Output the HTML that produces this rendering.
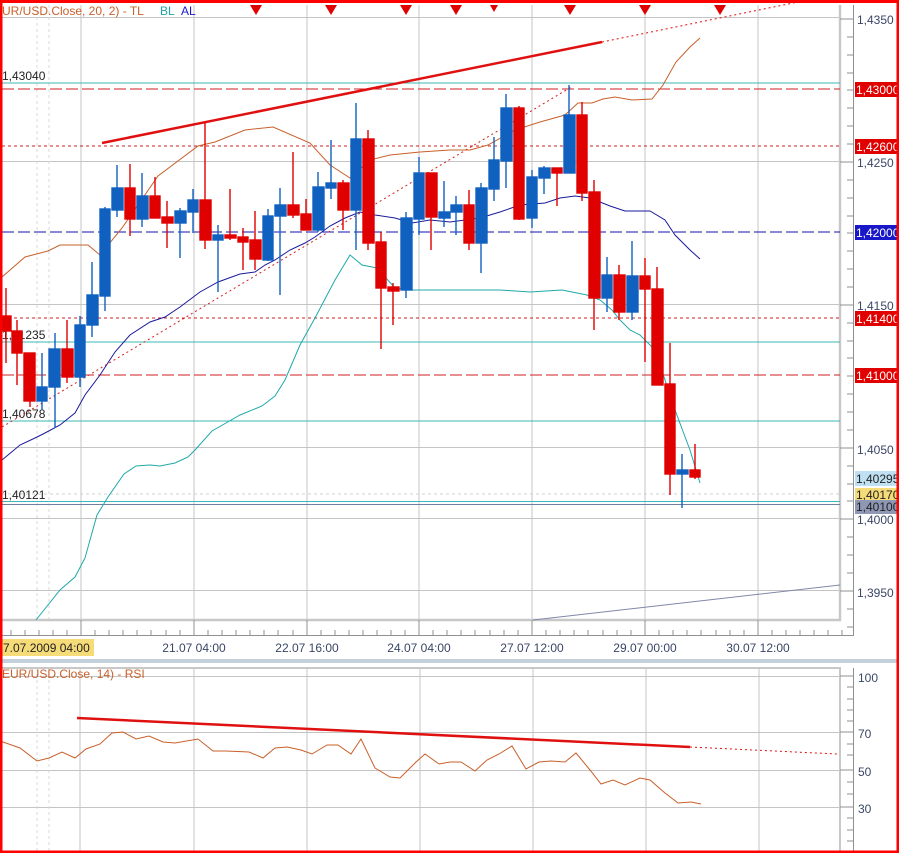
<!DOCTYPE html>
<html><head><meta charset="utf-8"><style>
html,body{margin:0;padding:0;background:#fff}
svg{display:block}
text{font-family:"Liberation Sans","DejaVu Sans",sans-serif;font-size:12px}
</style></head><body>
<svg width="899" height="853" viewBox="0 0 899 853" xmlns="http://www.w3.org/2000/svg">
<rect x="0" y="0" width="899" height="853" fill="#fff"/>
<g stroke="#c4c4c4" stroke-width="1">
<line x1="2" y1="17.5" x2="840" y2="17.5"/>
<line x1="2" y1="161.5" x2="840" y2="161.5"/>
<line x1="2" y1="304.5" x2="840" y2="304.5"/>
<line x1="2" y1="447.5" x2="840" y2="447.5"/>
<line x1="2" y1="518.5" x2="840" y2="518.5"/>
<line x1="2" y1="590.5" x2="840" y2="590.5"/>
<line x1="81" y1="5" x2="81" y2="620"/><line x1="194" y1="5" x2="194" y2="620"/>
<line x1="307" y1="5" x2="307" y2="620"/><line x1="419" y1="5" x2="419" y2="620"/>
<line x1="532" y1="5" x2="532" y2="620"/><line x1="645" y1="5" x2="645" y2="620"/>
<line x1="758" y1="5" x2="758" y2="620"/>
</g>
<g stroke="#d8d8d8" stroke-dasharray="3,3"><line x1="37" y1="5" x2="37" y2="620"/><line x1="49" y1="5" x2="49" y2="620"/></g>
<polyline points="2,620 840,620 840,5" fill="none" stroke="#c8c8c8" stroke-width="2.5"/>
<line x1="2" y1="83" x2="840" y2="83" stroke="#3cb8b8"/>
<line x1="2" y1="89" x2="840" y2="89" stroke="#d02020" stroke-dasharray="12,4"/>
<line x1="2" y1="146" x2="840" y2="146" stroke="#d02020" stroke-dasharray="3,3"/>
<line x1="2" y1="232" x2="840" y2="232" stroke="#1010b0" stroke-dasharray="12,4"/>
<line x1="2" y1="318" x2="840" y2="318" stroke="#d02020" stroke-dasharray="3,3"/>
<line x1="2" y1="342" x2="840" y2="342" stroke="#3cb8b8"/>
<line x1="2" y1="375" x2="840" y2="375" stroke="#d02020" stroke-dasharray="12,4"/>
<line x1="2" y1="421" x2="840" y2="421" stroke="#3cb8b8"/>
<line x1="2" y1="494" x2="840" y2="494" stroke="#d0d0d0" stroke-dasharray="3,3"/>
<line x1="2" y1="501.5" x2="840" y2="501.5" stroke="#3cb8b8"/>
<line x1="2" y1="504.5" x2="840" y2="504.5" stroke="#7080a0"/>
<text x="2" y="80" fill="#222">1,43040</text>
<text x="2" y="339" fill="#222">1,41235</text>
<text x="2" y="418" fill="#222">1,40678</text>
<text x="2" y="499" fill="#222">1,40121</text>
<line x1="533" y1="620" x2="840" y2="585" stroke="#8088a8"/>
<polyline fill="none" stroke="#c8602a" stroke-width="1" points="2,277 25,257 48,251 60,245 88,245 100,255 122,228 158,176 198,146 215,142 245,130 273,127 310,143 330,165 350,178 370,160 390,155 420,152 450,150 470,150 488,145 515,130 540,122 565,115 578,103 592,103 603,99 615,97 632,100 652,99 663,85 676,62 690,47 700,38"/>
<polyline fill="none" stroke="#20a8a8" stroke-width="1" points="36,620 60,590 75,577 85,558 97,515 108,497 124,474 136,466 150,465 160,466 175,463 188,457 195,450 212,431 226,423 240,415 262,406 275,396 285,380 300,345 315,318 335,280 350,255 362,265 377,268 395,288 410,290 450,290 500,290 530,292 562,290 587,295 600,300 612,310 620,320 630,330 640,335 655,350 665,380 675,410 690,450 700,483"/>
<polyline fill="none" stroke="#1a1a9a" stroke-width="1" points="2,460 20,445 35,438 45,433 60,425 75,413 85,395 100,375 115,352 130,335 150,322 165,317 180,307 200,292 218,282 240,274 255,272 265,265 275,260 290,250 305,243 315,237 330,226 345,218 360,212 375,215 395,218 412,223 430,220 450,222 480,218 500,212 520,205 545,203 560,198 575,196 590,198 610,206 625,211 650,211 665,220 675,235 690,250 700,259"/>
<line x1="2" y1="427" x2="573" y2="86" stroke="#d02020" stroke-dasharray="2,3"/>
<line x1="102" y1="143" x2="602" y2="42" stroke="#e01010" stroke-width="2.5"/>
<line x1="602" y1="42" x2="798" y2="2" stroke="#e01010" stroke-dasharray="2,3"/>
<g stroke-width="1.4">
<g stroke="#e00000" fill="#e00000">
<line x1="6" y1="288" x2="6" y2="363"/><rect x="1" y="316" width="10" height="15"/>
<line x1="17" y1="320" x2="17" y2="385"/><rect x="12" y="331" width="10" height="22"/>
<line x1="30" y1="353" x2="30" y2="407"/><rect x="24" y="353" width="11" height="48"/>
<line x1="67" y1="320" x2="67" y2="383"/><rect x="62" y="349" width="11" height="28"/>
<line x1="130" y1="164" x2="130" y2="236"/><rect x="125" y="188" width="10" height="31"/>
<line x1="155" y1="177" x2="155" y2="218"/><rect x="150" y="196" width="10" height="22"/>
<line x1="167" y1="201" x2="167" y2="248"/><rect x="162" y="217" width="11" height="6"/>
<line x1="205" y1="123" x2="205" y2="249"/><rect x="200" y="200" width="11" height="40"/>
<line x1="230" y1="189" x2="230" y2="240"/><rect x="225" y="235" width="11" height="3"/>
<line x1="243" y1="228" x2="243" y2="270"/><rect x="238" y="237" width="10" height="5"/>
<line x1="255" y1="211" x2="255" y2="270"/><rect x="250" y="240" width="11" height="19"/>
<line x1="293" y1="152" x2="293" y2="218"/><rect x="288" y="205" width="11" height="10"/>
<line x1="306" y1="199" x2="306" y2="230"/><rect x="301" y="214" width="10" height="16"/>
<line x1="343" y1="180" x2="343" y2="230"/><rect x="338" y="183" width="11" height="27"/>
<line x1="368" y1="130" x2="368" y2="250"/><rect x="363" y="139" width="11" height="104"/>
<line x1="381" y1="232" x2="381" y2="349"/><rect x="376" y="242" width="10" height="46"/>
<line x1="393" y1="283" x2="393" y2="325"/><rect x="388" y="287" width="11" height="4"/>
<line x1="431" y1="173" x2="431" y2="250"/><rect x="426" y="173" width="11" height="44"/>
<line x1="469" y1="190" x2="469" y2="250"/><rect x="464" y="205" width="10" height="38"/>
<line x1="519" y1="106" x2="519" y2="220"/><rect x="514" y="108" width="10" height="111"/>
<line x1="557" y1="168" x2="557" y2="206"/><rect x="552" y="168" width="10" height="5"/>
<line x1="582" y1="102" x2="582" y2="201"/><rect x="577" y="115" width="10" height="78"/>
<line x1="594" y1="180" x2="594" y2="330"/><rect x="589" y="192" width="11" height="106"/>
<line x1="619" y1="265" x2="619" y2="320"/><rect x="614" y="275" width="11" height="37"/>
<line x1="645" y1="258" x2="645" y2="362"/><rect x="640" y="276" width="10" height="13"/>
<line x1="657" y1="267" x2="657" y2="385"/><rect x="652" y="289" width="11" height="96"/>
<line x1="670" y1="343" x2="670" y2="495"/><rect x="665" y="384" width="10" height="90"/>
<line x1="695" y1="444" x2="695" y2="479"/><rect x="690" y="470" width="10" height="7"/>
</g>
<g stroke="#1060c0" fill="#1060c0">
<line x1="42" y1="353" x2="42" y2="410"/><rect x="37" y="387" width="10" height="14"/>
<line x1="55" y1="333" x2="55" y2="428"/><rect x="49" y="349" width="11" height="38"/>
<line x1="80" y1="316" x2="80" y2="387"/><rect x="75" y="325" width="10" height="52"/>
<line x1="92" y1="262" x2="92" y2="337"/><rect x="87" y="295" width="11" height="30"/>
<line x1="105" y1="207" x2="105" y2="311"/><rect x="100" y="209" width="10" height="87"/>
<line x1="117" y1="165" x2="117" y2="217"/><rect x="112" y="188" width="11" height="22"/>
<line x1="142" y1="173" x2="142" y2="227"/><rect x="137" y="196" width="11" height="23"/>
<line x1="180" y1="208" x2="180" y2="258"/><rect x="175" y="211" width="11" height="12"/>
<line x1="193" y1="189" x2="193" y2="233"/><rect x="188" y="200" width="10" height="12"/>
<line x1="218" y1="225" x2="218" y2="292"/><rect x="213" y="235" width="10" height="5"/>
<line x1="268" y1="209" x2="268" y2="261"/><rect x="263" y="216" width="10" height="44"/>
<line x1="280" y1="188" x2="280" y2="295"/><rect x="275" y="205" width="11" height="11"/>
<line x1="318" y1="172" x2="318" y2="232"/><rect x="313" y="187" width="11" height="43"/>
<line x1="331" y1="140" x2="331" y2="199"/><rect x="326" y="183" width="10" height="5"/>
<line x1="356" y1="103" x2="356" y2="250"/><rect x="351" y="139" width="10" height="71"/>
<line x1="406" y1="212" x2="406" y2="298"/><rect x="401" y="218" width="11" height="72"/>
<line x1="419" y1="157" x2="419" y2="235"/><rect x="414" y="173" width="10" height="46"/>
<line x1="444" y1="181" x2="444" y2="227"/><rect x="439" y="212" width="11" height="6"/>
<line x1="456" y1="196" x2="456" y2="235"/><rect x="451" y="205" width="11" height="7"/>
<line x1="481" y1="183" x2="481" y2="273"/><rect x="476" y="188" width="11" height="55"/>
<line x1="494" y1="137" x2="494" y2="201"/><rect x="489" y="160" width="10" height="29"/>
<line x1="506" y1="94" x2="506" y2="188"/><rect x="501" y="108" width="11" height="53"/>
<line x1="532" y1="170" x2="532" y2="228"/><rect x="527" y="177" width="10" height="41"/>
<line x1="544" y1="166" x2="544" y2="194"/><rect x="539" y="168" width="11" height="10"/>
<line x1="569" y1="85" x2="569" y2="173"/><rect x="564" y="115" width="11" height="58"/>
<line x1="607" y1="257" x2="607" y2="312"/><rect x="602" y="275" width="10" height="23"/>
<line x1="632" y1="241" x2="632" y2="320"/><rect x="627" y="276" width="11" height="36"/>
<line x1="682" y1="454" x2="682" y2="508"/><rect x="677" y="470" width="11" height="4"/>
</g>
</g>
<g fill="#e00000">
<polygon points="250,5 262,5 256,15"/><polygon points="325,5 337,5 331,15"/><polygon points="400,5 412,5 406,15"/>
<polygon points="450,5 462,5 456,15"/><polygon points="490,5 498,5 494,12"/><polygon points="564,5 576,5 570,15"/>
<polygon points="639,5 651,5 645,15"/><polygon points="714,5 726,5 720,15"/>
</g>
<text x="2" y="15" fill="#c8602a">UR/USD.Close, 20, 2) - TL</text>
<text x="160" y="15" fill="#20a8a8">BL</text>
<text x="181" y="15" fill="#1a1acc">AL</text>
<line x1="853.5" y1="5" x2="853.5" y2="635" stroke="#909090"/>
<g stroke="#909090">
<line x1="840" y1="19" x2="853" y2="19"/><line x1="840" y1="162" x2="853" y2="162"/><line x1="840" y1="305" x2="853" y2="305"/><line x1="840" y1="448" x2="853" y2="448"/><line x1="840" y1="519" x2="853" y2="519"/><line x1="840" y1="591" x2="853" y2="591"/>
<path d="M847 37H853M847 55H853M847 73H853M847 90H853M847 108H853M847 126H853M847 144H853M847 180H853M847 198H853M847 216H853M847 233H853M847 251H853M847 269H853M847 287H853M847 323H853M847 341H853M847 358H853M847 376H853M847 394H853M847 412H853M847 430H853M847 466H853M847 484H853M847 501H853M847 537H853M847 555H853M847 573H853M847 609H853M847 627H853"/>
</g>
<g fill="#3a4666">
<text x="857" y="24">1,4350</text><text x="857" y="167">1,4250</text><text x="857" y="310">1,4150</text>
<text x="857" y="454">1,4050</text><text x="857" y="524">1,4000</text><text x="857" y="597">1,3950</text>
</g>
<rect x="855" y="82" width="42" height="15" fill="#e00000"/><text x="856" y="94" fill="#fff">1,43000</text>
<rect x="855" y="139" width="42" height="15" fill="#e00000"/><text x="856" y="151" fill="#fff">1,42600</text>
<rect x="855" y="225" width="42" height="15" fill="#1818c8"/><text x="856" y="237" fill="#fff">1,42000</text>
<rect x="855" y="311" width="42" height="15" fill="#e00000"/><text x="856" y="323" fill="#fff">1,41400</text>
<rect x="855" y="368" width="42" height="15" fill="#e00000"/><text x="856" y="380" fill="#fff">1,41000</text>
<rect x="855" y="471" width="42" height="15" fill="#bfe0f2"/><text x="856" y="483" fill="#222">1,40295</text>
<rect x="855" y="488" width="42" height="12" fill="#f6dc78"/><text x="856" y="499" fill="#222">1,40170</text>
<rect x="855" y="500" width="42" height="14" fill="#8e98b4"/><text x="856" y="511" fill="#222">1,40100</text>
<line x1="2" y1="635.5" x2="854" y2="635.5" stroke="#909090"/>
<path stroke="#909090" d="M81 620V635M194 620V635M307 620V635M419 620V635M532 620V635M645 620V635M758 620V635M11 630V635M25 630V635M39 630V635M53 630V635M67 630V635M95 630V635M109 630V635M123 630V635M137 630V635M151 630V635M166 630V635M180 630V635M208 630V635M222 630V635M236 630V635M250 630V635M264 630V635M278 630V635M293 630V635M321 630V635M335 630V635M349 630V635M363 630V635M377 630V635M391 630V635M405 630V635M433 630V635M447 630V635M461 630V635M475 630V635M490 630V635M504 630V635M518 630V635M546 630V635M560 630V635M574 630V635M588 630V635M603 630V635M617 630V635M631 630V635M659 630V635M673 630V635M687 630V635M701 630V635M716 630V635M730 630V635M744 630V635M772 630V635M786 630V635M800 630V635M814 630V635M828 630V635M842 630V635"/>
<rect x="2" y="639" width="92" height="17" fill="#f6dc78"/>
<text x="3" y="652" fill="#222">7.07.2009 04:00</text>
<g fill="#3a4666" text-anchor="middle">
<text x="194" y="652">21.07 04:00</text><text x="307" y="652">22.07 16:00</text><text x="419" y="652">24.07 04:00</text>
<text x="532" y="652">27.07 12:00</text><text x="645" y="652">29.07 00:00</text><text x="758" y="652">30.07 12:00</text>
</g>
<rect x="2" y="659" width="895" height="4" fill="#c4d0dc"/>
<g stroke="#c4c4c4">
<line x1="2" y1="676.5" x2="840" y2="676.5"/><line x1="2" y1="732.5" x2="840" y2="732.5"/><line x1="2" y1="770.5" x2="840" y2="770.5"/><line x1="2" y1="807.5" x2="840" y2="807.5"/>
<line x1="80" y1="668" x2="80" y2="851"/><line x1="194" y1="668" x2="194" y2="851"/><line x1="307" y1="668" x2="307" y2="851"/><line x1="420" y1="668" x2="420" y2="851"/><line x1="533" y1="668" x2="533" y2="851"/><line x1="646" y1="668" x2="646" y2="851"/><line x1="759" y1="668" x2="759" y2="851"/>
</g>
<g stroke="#d8d8d8" stroke-dasharray="3,3"><line x1="37" y1="668" x2="37" y2="851"/><line x1="49" y1="668" x2="49" y2="851"/></g>
<polyline points="2,668 840,668 840,851" fill="none" stroke="#c8c8c8" stroke-width="2"/>
<text x="2" y="678" fill="#c8602a">EUR/USD.Close, 14) - RSI</text>
<line x1="77" y1="718" x2="690" y2="747" stroke="#e01010" stroke-width="2.5"/>
<line x1="690" y1="747" x2="837" y2="754" stroke="#e01010" stroke-dasharray="2,3"/>
<polyline fill="none" stroke="#c8602a" points="0,741 20,748 37,761 49,758 62,752 75,758 86,749 100,744 112,733 123,732 136,739 149,736 163,742 175,743 198,739 213,751 226,751 249,752 263,758 275,748 287,747 301,750 312,754 327,745 338,745 351,754 361,739 375,768 390,777 400,778 416,762 425,754 439,764 450,762 461,762 475,771 487,760 499,754 512,746 526,769 539,762 551,761 565,762 576,753 590,770 601,784 613,780 625,785 640,778 650,780 665,793 678,803 691,802 701,804"/>
<line x1="853.5" y1="668" x2="853.5" y2="851" stroke="#909090"/>
<path stroke="#909090" d="M840 676H853M840 732H853M840 770H853M840 807H853M847 687H853M847 699H853M847 710H853M847 721H853M847 744H853M847 755H853M847 782H853M847 794H853M847 818H853M847 830H853M847 841H853"/>
<g fill="#3a4666"><text x="858" y="682">100</text><text x="858" y="738">70</text><text x="858" y="776">50</text><text x="858" y="813">30</text></g>
<rect x="0" y="0" width="899" height="3" fill="#ff0000"/>
<rect x="0" y="0" width="2.5" height="853" fill="#ff0000"/>
<rect x="896.5" y="0" width="3" height="853" fill="#ff0000"/>
<rect x="0" y="850.5" width="899" height="3" fill="#ff0000"/>
</svg>
</body></html>
